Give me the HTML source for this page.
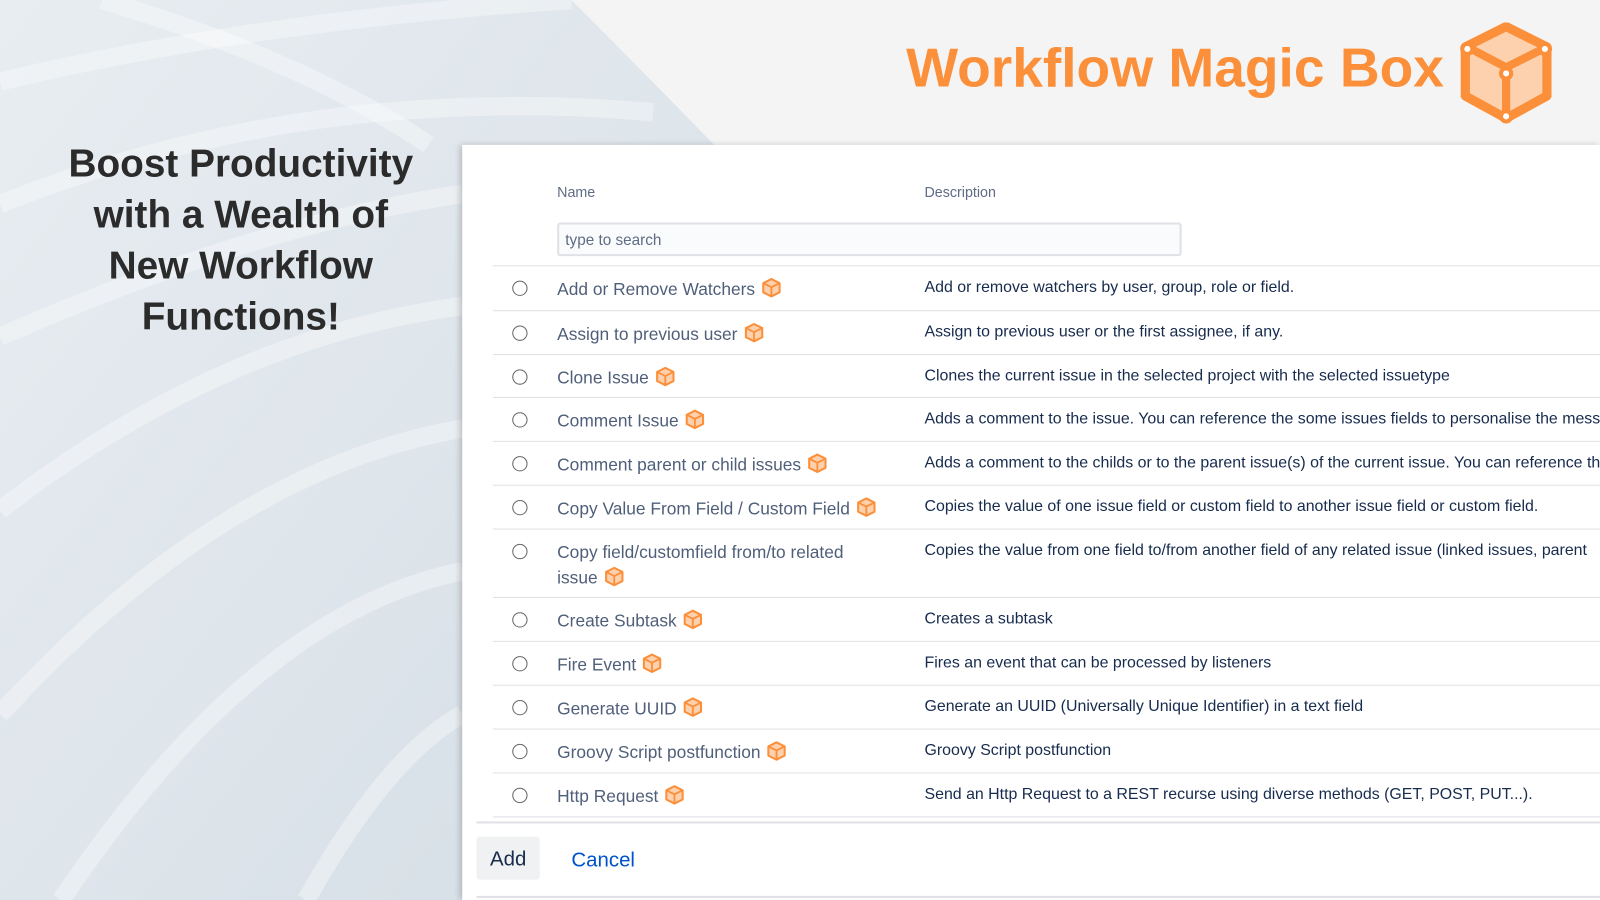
<!DOCTYPE html>
<html style="width:1600px;height:900px;overflow:hidden"><head><style>
*{margin:0;padding:0;box-sizing:border-box}
body{width:1600px;height:900px;overflow:hidden;position:relative;font-family:"Liberation Sans",sans-serif;background:#f4f4f4}
#clip{position:absolute;left:0;top:0;width:1600px;height:900px;overflow:hidden}
#w{position:absolute;left:0;top:0;width:1568px;height:882px;transform:scale(1.0204);transform-origin:0 0}
.bg{position:absolute;left:0;top:0;width:1568px;height:882px}
h1{position:absolute;left:20px;top:136px;width:432px;text-align:center;font-size:38px;line-height:50px;color:#2b2b2b;font-weight:bold}
.title{position:absolute;left:888px;top:36px;font-size:54px;font-weight:bold;color:#fb8f3a}
.panel{position:absolute;left:453px;top:142px;width:1115px;height:740px;background:#fff;box-shadow:-2px 0 6px rgba(0,0,0,.2);overflow:hidden}
.hd{position:absolute;top:38px;font-size:14px;color:#5e6c84}
.search{position:absolute;left:93px;top:76px;width:612px;height:33px;border:2px solid #dfe1e6;background:#fafbfc;border-radius:3px;font-size:15px;color:#5e6c84;padding:7px 6px}
.row{position:absolute;left:30px;right:0;border-top:1px solid #dfe1e6}
.r{position:absolute;width:15px;height:15px;border:1.5px solid #666;border-radius:50%}
.n{position:absolute;width:320px;font-size:17px;color:#505f79;line-height:25px}
.d{position:absolute;font-size:15.6px;color:#172b4d;white-space:nowrap;line-height:20px}
.ic{display:inline-block;vertical-align:-3px;margin-left:6px}
.add{position:absolute;left:14px;top:678px;width:62px;height:42px;background:#f0f1f3;border-radius:3px;font-size:20px;color:#172b4d;text-align:center;line-height:44px}
.cancel{position:absolute;left:107px;top:690px;font-size:20px;color:#0052cc}
</style></head><body><div id="clip"><div id="w">
<svg class="bg" viewBox="0 0 1568 882">
<defs><linearGradient id="g" x1="0" y1="0" x2="1" y2="1"><stop offset="0" stop-color="#e8edf1"/><stop offset="1" stop-color="#d5dee6"/></linearGradient></defs>
<path d="M0 0H560Q620 60 700 142H453V882H0Z" fill="url(#g)"/>
<g fill="none" stroke="#fff" stroke-opacity=".35" stroke-width="18">
<path d="M0 80Q250 20 560 0"/><path d="M0 200Q300 80 640 110"/><path d="M0 330Q250 220 453 190"/><path d="M0 500Q220 330 453 300"/><path d="M0 700Q220 460 453 420"/><path d="M60 882Q250 600 453 560"/><path d="M300 882Q380 740 453 700"/><path d="M100 0Q300 60 420 142"/>
</g>
</svg>
<h1>Boost Productivity<br>with a Wealth of<br>New Workflow<br>Functions!</h1>
<div class="title">Workflow Magic Box</div>
<svg style="position:absolute;left:1428px;top:22px" width="96" height="100" viewBox="0 0 96 100">
<path d="M48 4L88 24V72L48 94L8 72V24Z" fill="#fdd1ae" stroke="#fb8f3a" stroke-width="9" stroke-linejoin="round"/>
<path d="M10 24L48 44L88 24M48 44V94" stroke="#fb8f3a" stroke-width="8" fill="none"/>
<g fill="#fff" stroke="#fb8f3a" stroke-width="4"><circle cx="10" cy="26" r="5"/><circle cx="86" cy="26" r="5"/><circle cx="48" cy="50" r="5"/><circle cx="48" cy="92" r="5"/></g>
</svg>
<div class="panel">
<div class="hd" style="left:93px">Name</div>
<div class="hd" style="left:453px">Description</div>
<div class="search">type to search</div>
<div id="rows"></div>
<div style="position:absolute;left:14px;right:0;top:663px;border-top:2px solid #dfe1e6"></div>
<div class="add">Add</div><div class="cancel">Cancel</div>
<div style="position:absolute;left:14px;right:0;top:736px;border-top:2px solid #dfe1e6"></div>
</div>
</div></div>
<script>
var ic='<svg class="ic" width="20" height="20" viewBox="0 0 20 20"><path d="M10 1.5L18 5.5V14.5L10 18.5L2 14.5V5.5Z" fill="#fdd1ae" stroke="#fb8f3a" stroke-width="2" stroke-linejoin="round"/><path d="M2 5.5L10 9.5L18 5.5M10 9.5V18.5" stroke="#fb8f3a" stroke-width="1.8" fill="none"/></svg>';
var R=[[118,"Add or Remove Watchers","Add or remove watchers by user, group, role or field."],
[162,"Assign to previous user","Assign to previous user or the first assignee, if any."],
[205,"Clone Issue","Clones the current issue in the selected project with the selected issuetype"],
[247,"Comment Issue","Adds a comment to the issue. You can reference the some issues fields to personalise the message"],
[290,"Comment parent or child issues","Adds a comment to the childs or to the parent issue(s) of the current issue. You can reference the"],
[333,"Copy Value From Field / Custom Field","Copies the value of one issue field or custom field to another issue field or custom field."],
[376,"Copy field/customfield from/to related issue","Copies the value from one field to/from another field of any related issue (linked issues, parent"],
[443,"Create Subtask","Creates a subtask"],
[486,"Fire Event","Fires an event that can be processed by listeners"],
[529,"Generate UUID","Generate an UUID (Universally Unique Identifier) in a text field"],
[572,"Groovy Script postfunction","Groovy Script postfunction"],
[615,"Http Request","Send an Http Request to a REST recurse using diverse methods (GET, POST, PUT...)."]];
var h='';R.forEach(function(r){var t=r[0];h+='<div class="row" style="top:'+t+'px"></div><div class="r" style="left:49px;top:'+(t+15)+'px"></div><div class="n" style="left:93px;top:'+(t+11)+'px">'+r[1]+ic+'</div><div class="d" style="left:453px;top:'+(t+12)+'px">'+r[2]+'</div>';});
h+='<div class="row" style="top:658px"></div>';
document.getElementById('rows').innerHTML=h;
</script>
</body></html>
